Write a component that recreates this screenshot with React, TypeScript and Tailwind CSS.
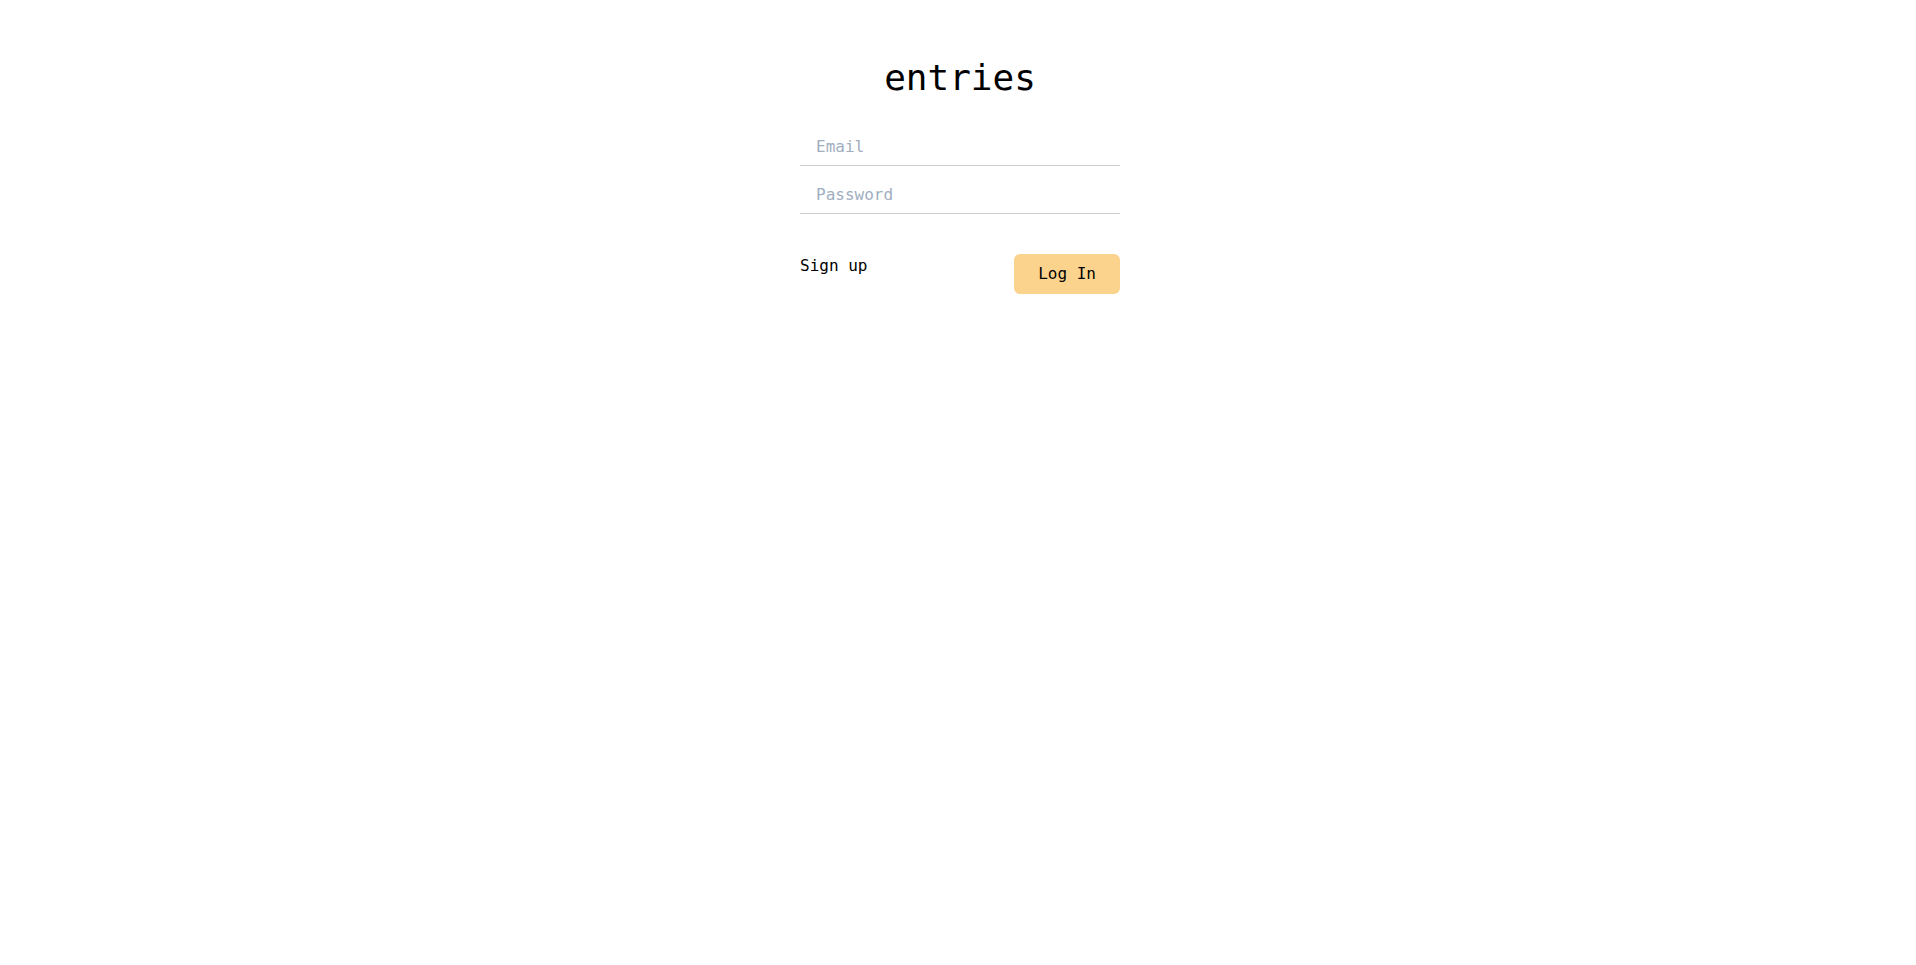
import React from 'react';

export default function App() {
  const [email, setEmail] = React.useState('');
  const [password, setPassword] = React.useState('');

  return (
    <div className="min-h-screen bg-white pt-[58px] pl-1 font-['DejaVu_Sans_Mono','Liberation_Mono',monospace] text-black">
      <h1 className="mb-5 text-center text-4xl leading-10 font-medium">entries</h1>

      <form className="mx-auto w-80" onSubmit={(e) => e.preventDefault()}>
        <input
          type="email"
          placeholder="Email"
          value={email}
          onChange={(e) => setEmail(e.target.value)}
          className="block h-12 w-full border-b border-[#cccccc] px-4 pt-4 pb-[7px] text-base leading-6 outline-none placeholder:text-[#a0aec0]"
        />
        <input
          type="password"
          placeholder="Password"
          value={password}
          onChange={(e) => setPassword(e.target.value)}
          className="block h-12 w-full border-b border-[#cccccc] px-4 pt-4 pb-[7px] text-base leading-6 outline-none placeholder:text-[#a0aec0]"
        />

        <div className="mt-10 flex items-start justify-between">
          <a href="#" className="text-base leading-6 text-black">Sign up</a>
          <button type="submit" className="rounded-md bg-[#fbd38d] px-6 py-2 text-base leading-6 text-black">
            Log In
          </button>
        </div>
      </form>
    </div>
  );
}
